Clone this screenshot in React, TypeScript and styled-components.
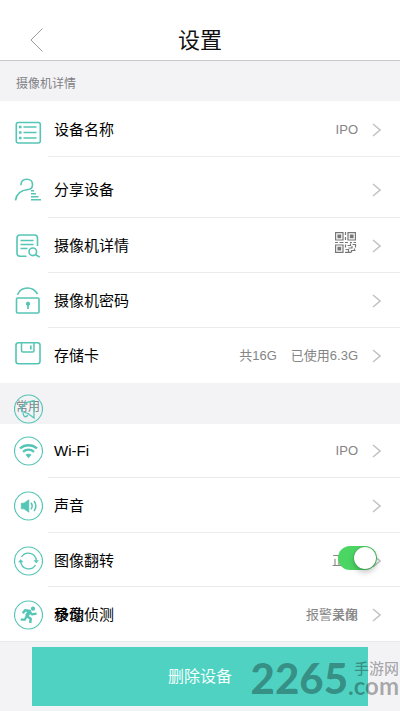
import React, { useState } from "react";
import styled, { createGlobalStyle } from "styled-components";

const TEAL = "#55c5b5";

const GlobalStyle = createGlobalStyle`
  * { box-sizing: border-box; }
  body {
    margin: 0;
    background: #f3f3f6;
    font-family: "Liberation Sans", "Noto Sans CJK SC", sans-serif;
    color: #111;
  }
  button { font-family: inherit; border: 0; padding: 0; background: none; cursor: pointer; }
`;

const Page = styled.main`
  position: relative;
  min-height: 100vh;
  display: flex;
  flex-direction: column;
`;

const Header = styled.header`
  display: grid;
  grid-template-columns: 56px 1fr 56px;
  align-items: center;
  height: 61px;
  padding-top: 20px;
  background: #fff;
  border-bottom: 1px solid #c9c9cc;
`;

const BackButton = styled.button`
  display: flex;
  padding-left: 30px;
`;

const Title = styled.h1`
  margin: 0;
  padding-top: 2px;
  text-align: center;
  font-size: 22px;
  line-height: 38px;
  font-weight: 400;
`;

const SectionTitle = styled.h2<{ $height: number }>`
  position: relative;
  display: flex;
  align-items: center;
  height: ${(p) => p.$height}px;
  margin: 0;
  padding: 3px 16px 0;
  font-size: 12px;
  font-weight: 400;
  color: #808084;
`;

const StrayIcon = styled.span`
  position: absolute;
  left: 14px;
  bottom: 0;
  display: flex;
`;

const List = styled.ul`
  margin: 0;
  padding: 0;
  list-style: none;
  background: #fff;
`;

const Row = styled.li<{ $height: number; $top?: number }>`
  position: relative;
  display: flex;
  align-items: stretch;
  height: ${(p) => p.$height}px;
  padding: ${(p) => p.$top ?? 0}px 0 0 14px;
`;

const IconCell = styled.span`
  display: flex;
  align-items: center;
  width: 34px;
`;

const RowBody = styled.div<{ $last?: boolean }>`
  flex: 1;
  display: flex;
  align-items: center;
  padding: 1px 19px 0 6px;
  border-bottom: 1px solid ${(p) => (p.$last ? "transparent" : "#ececee")};
`;

const Label = styled.span`
  position: relative;
  flex: 1;
  font-size: 15px;
  line-height: 22px;
  color: #000;
`;

const Value = styled.span`
  position: relative;
  display: flex;
  gap: 14px;
  margin-right: 14px;
  font-size: 13px;
  line-height: 20px;
  color: #858585;
`;

const LabelOver = styled.span`
  position: absolute;
  left: 0;
  top: 0;
`;

const ValueOver = styled.span`
  position: absolute;
  right: 0;
  top: 0;
`;

const Toggle = styled.input`
  position: absolute;
  right: 23px;
  top: 13px;
  width: 39px;
  height: 24px;
  margin: 0;
  appearance: none;
  border-radius: 12px;
  background: #ddd;
  cursor: pointer;
  &:checked { background: #4bd663; }
  &::after {
    content: "";
    position: absolute;
    left: 1px;
    top: 1px;
    width: 22px;
    height: 22px;
    border-radius: 50%;
    background: #fff;
    box-shadow: 0 3px 6px rgba(0, 0, 0, 0.25), 0 0 1px rgba(0, 0, 0, 0.5);
  }
  &:checked::after { left: 16px; }
`;

const Footer = styled.footer`
  position: relative;
  padding: 5px 32px;
  border-top: 1px solid #e9e9ec;
`;

const DeleteButton = styled.button`
  display: block;
  width: 100%;
  height: 59px;
  padding-bottom: 4px;
  background: #50d2c2;
  color: #f4fffd;
  font-size: 16px;
`;

const Watermark = styled.div`
  position: absolute;
  right: 1px;
  top: 14px;
  display: flex;
  align-items: center;
  color: rgba(0, 0, 0, 0.32);
  pointer-events: none;
`;

const MarkNumber = styled.span`
  font: 900 42px/44px Lato, sans-serif;
`;

const MarkSide = styled.span`
  display: flex;
  flex-direction: column;
  align-items: flex-end;
`;

const MarkName = styled.span`
  font-size: 15px;
  line-height: 16px;
  font-weight: 500;
`;

const MarkDomain = styled.span`
  font: 700 24px/18px Lato, sans-serif;
`;

const IconSvg = ({ children }: { children: React.ReactNode }) => (
  <svg width="29" height="30" viewBox="0 0 29 30" fill="none" stroke={TEAL} strokeWidth="1.6" aria-hidden="true">
    {children}
  </svg>
);

const Ring = () => <circle cx="14.5" cy="15" r="14" strokeWidth="1.2" />;

const ListIcon = () => (
  <IconSvg>
    <rect x="2.3" y="7.500" width="24" height="20.5" rx="2" />
    <path d="M9.500 12h13M9.500 17.500h13M9.500 23h13" strokeWidth="1.4" />
    <path d="M5 12h2.500M5 17.500h2.500M5 23h2.500" strokeWidth="2.4" />
  </IconSvg>
);

const ShareIcon = () => (
  <IconSvg>
    <path d="M6.800 10.200C7 6.200 9.600 4.200 12.800 4.200c3.400 0 5.700 2.100 5.700 5.200 0 2.800-1.800 4.800-4.400 5.100-7 .7-11.800 4-12.600 10.900" />
    <path d="M17 15.700h3M17 18.700h5M17 21.700h7.500M17 24.700h10" strokeWidth="1.4" />
  </IconSvg>
);

const DetailIcon = () => (
  <IconSvg>
    <path d="M12.500 25.200H6a3 3 0 0 1-3-3V7a3 3 0 0 1 3-3h14.500a3 3 0 0 1 3 3v8" />
    <path d="M6.500 9.500h13M6.500 13.500h13M6.500 17.500h7" strokeWidth="1.4" />
    <circle cx="18.800" cy="20.800" r="3.800" />
    <path d="M21.600 23.700l4.200 2.400" />
  </IconSvg>
);

const LockIcon = () => (
  <IconSvg>
    <rect x="2.500" y="12" width="22.500" height="15" rx="1" />
    <path d="M3.500 8.800c1.600-4 5.400-6.800 10.100-6.800 4.300 0 7.900 2.500 9.900 6" />
    <circle cx="14" cy="17.800" r="1.700" fill={TEAL} strokeWidth="1" />
    <path d="M14 18.500v4.500" strokeWidth="1.700" />
  </IconSvg>
);

const CardIcon = () => (
  <IconSvg>
    <rect x="2" y="1.800" width="24" height="21" rx="2.500" />
    <path d="M7.500 2v7.500a1.500 1.500 0 0 0 1.500 1.500h9.500a1.500 1.500 0 0 0 1.500-1.500V2" strokeWidth="1.500" />
    <path d="M16.800 4.500v4" strokeWidth="1.700" />
  </IconSvg>
);

const HornIcon = () => (
  <IconSvg>
    <Ring />
    <path d="M8 17.500L6.800 13.500 12 8.500 20 6.500v17.500L14 19.500 8 17.500zM9 19c.5 4 2.800 5 5 2" strokeWidth="1.300" />
  </IconSvg>
);

const WifiIcon = () => (
  <IconSvg>
    <Ring />
    <path d="M6 12.300c4.900-4.100 12.100-4.100 17 0M9 15.800c3.200-2.800 7.800-2.800 11 0" strokeWidth="2.300" />
    <path d="M11.500 18.700c1.800-1.400 4.200-1.400 6 0l-3 3.600z" fill={TEAL} stroke="none" />
  </IconSvg>
);

const SoundIcon = () => (
  <IconSvg>
    <Ring />
    <path d="M7.300 12.200h2.700l4.800-3.400v12.400L10 17.800H7.300z" fill={TEAL} strokeWidth="0.800" />
    <path d="M17 11.800c1.400 1.900 1.400 4.500 0 6.400M20 10c2.200 3 2.200 7 0 10" strokeWidth="1.500" />
  </IconSvg>
);

const FlipIcon = () => (
  <IconSvg>
    <Ring />
    <path d="M7.500 11a8 8 0 0 1 14.800 3.500M21.500 19A8 8 0 0 1 6.700 15.500" strokeWidth="1.400" />
    <path d="M19.500 14.200h5.400l-2.700 3.100zM4 16.300h5.400l-2.700-3.100z" fill={TEAL} stroke="none" />
  </IconSvg>
);

const RunIcon = () => (
  <IconSvg>
    <Ring />
    <circle cx="19" cy="8.700" r="2.100" fill={TEAL} stroke="none" />
    <path d="M8.800 13.300l2.300-3 4.900.7-3.200 5 3.900 2.700-.5 4.300" strokeWidth="2.500" strokeLinejoin="round" />
    <path d="M15.500 11.500l2.600 2.900 4.500-.7M12.500 16.500l-1.700 3.200H6.700" strokeWidth="2.300" strokeLinejoin="round" />
    <path d="M15.500 11.500l-2.800 4.500" strokeWidth="3.800" />
  </IconSvg>
);

const Chevron = () => (
  <svg width="9" height="14" viewBox="0 0 9 14" fill="none" stroke="#c2c2c5" strokeWidth="1.500" aria-hidden="true">
    <path d="M1 1l7 6-7 6" />
  </svg>
);

const QrIcon = () => (
  <svg width="23" height="21" viewBox="0 0 23 21" fill="none" stroke="#777" strokeWidth="1.200" role="img" aria-label="二维码">
    <path d="M.6.600h7.400v7.400H.6zM13 .600h7.400v7.400H13zM.6 13h7.400v7.400H.6z" />
    <path d="M3 3h2.600v2.600H3zM15.400 3H18v2.600h-2.600zM3 15.400h2.600V18H3z" fill="#777" />
    <path d="M10.500 0v3M10.500 5v3M0 10.500h3M4.500 10.500h4M10 10.500h3M15 10.500h2M18.500 10.500H21M10.500 12.500v3M12.500 13.500h3v-2M17.500 12.500h3v3M10.500 17.500h3v3M13.500 16h3.500v-2M17 18.500h3.500M16.500 20.500v-2.500M10 20.400h6M19.500 16.500v2" />
  </svg>
);

type Item = {
  icon: React.ReactNode;
  label: string;
  labelOver?: string;
  values?: React.ReactNode[];
  valueOver?: string;
  height: number;
  top?: number;
  toggle?: boolean;
};

const cameraItems: Item[] = [
  { icon: <ListIcon />, label: "设备名称", values: ["IPO"], height: 56, top: 1 },
  { icon: <ShareIcon />, label: "分享设备", height: 61, top: 4 },
  { icon: <DetailIcon />, label: "摄像机详情", values: [<QrIcon key="qr" />], height: 55 },
  { icon: <LockIcon />, label: "摄像机密码", height: 55 },
  { icon: <CardIcon />, label: "存储卡", values: ["共16G", "已使用6.3G"], height: 55 },
];

const commonItems: Item[] = [
  { icon: <WifiIcon />, label: "Wi-Fi", values: ["IPO"], height: 54 },
  { icon: <SoundIcon />, label: "声音", height: 55 },
  { icon: <FlipIcon />, label: "图像翻转", values: ["正常"], height: 54, top: 1, toggle: true },
  { icon: <RunIcon />, label: "移动侦测", labelOver: "录像", values: ["报警关闭"], valueOver: "录像", height: 54, top: 1 },
];

const SettingsList = ({ items }: { items: Item[] }) => {
  const [on, setOn] = useState(true);
  return (
    <List>
      {items.map((item, i) => (
        <Row key={item.label} $height={item.height} $top={item.top}>
          <IconCell>{item.icon}</IconCell>
          <RowBody $last={i === items.length - 1}>
            <Label>
              {item.label}
              {item.labelOver && <LabelOver>{item.labelOver}</LabelOver>}
            </Label>
            {item.values && (
              <Value>
                {item.values.map((v, n) => (
                  <span key={n}>{v}</span>
                ))}
                {item.valueOver && <ValueOver>{item.valueOver}</ValueOver>}
              </Value>
            )}
            <Chevron />
          </RowBody>
          {item.toggle && (
            <Toggle type="checkbox" aria-label={item.label} checked={on} onChange={() => setOn(!on)} />
          )}
        </Row>
      ))}
    </List>
  );
};

export default function App() {
  return (
    <>
      <GlobalStyle />
      <Page>
        <Header>
          <BackButton aria-label="返回">
            <svg width="13" height="24" viewBox="0 0 13 24" fill="none" stroke="#9a9a9a" strokeWidth="1">
              <path d="M12.500 .500L1 12l11.500 11.500" />
            </svg>
          </BackButton>
          <Title>设置</Title>
        </Header>
        <SectionTitle $height={40}>摄像机详情</SectionTitle>
        <SettingsList items={cameraItems} />
        <SectionTitle $height={41}>
          常用
          <StrayIcon><HornIcon /></StrayIcon>
        </SectionTitle>
        <SettingsList items={commonItems} />
        <Footer>
          <DeleteButton>删除设备</DeleteButton>
          <Watermark>
            <MarkNumber>2265</MarkNumber>
            <MarkSide>
              <MarkName>手游网</MarkName>
              <MarkDomain>.com</MarkDomain>
            </MarkSide>
          </Watermark>
        </Footer>
      </Page>
    </>
  );
}
